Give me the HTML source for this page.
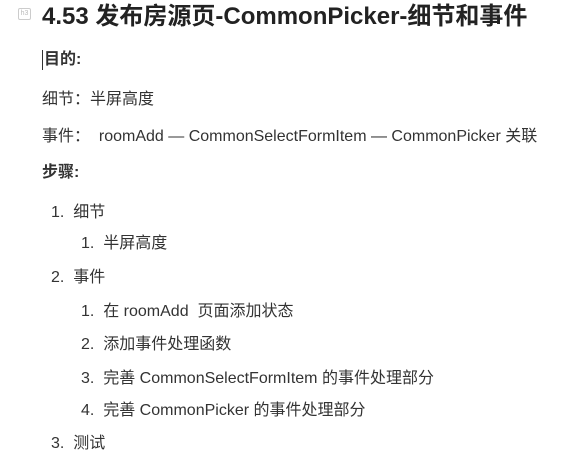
<!DOCTYPE html><html><head><meta charset="utf-8"><style>
body{margin:0;width:566px;height:461px;background:#fff;font-family:"Liberation Sans","Noto Sans CJK SC",sans-serif;color:#333;position:relative;overflow:hidden}
.t{position:absolute;white-space:nowrap;font-size:16px;line-height:20px}
h3{position:absolute;left:42px;top:2px;margin:0;font-size:24px;line-height:30px;font-weight:bold;color:#222;white-space:nowrap}
.h3i{position:absolute;left:18px;top:8px;width:11px;height:10px;border:1px solid #ccc;border-radius:2px;font-size:7px;color:#bbb;text-align:center;line-height:10px}
b{font-weight:bold}
</style></head><body>
<div class="h3i">h3</div>
<h3>4.53 发布房源页-CommonPicker-细节和事件</h3>
<div class="t" style="left:42px;top:50px;border-left:1px solid #333;padding-left:1px"><b>目的:</b></div>
<div class="t" style="left:42px;top:90px">细节：半屏高度</div>
<div class="t" style="left:42px;top:127px">事件：&nbsp; roomAdd — CommonSelectFormItem — CommonPicker 关联</div>
<div class="t" style="left:42px;top:163px"><b>步骤:</b></div>
<div class="t" style="left:51px;top:203px">1.&nbsp; 细节</div>
<div class="t" style="left:81px;top:234px">1.&nbsp; 半屏高度</div>
<div class="t" style="left:51px;top:268px">2.&nbsp; 事件</div>
<div class="t" style="left:81px;top:302px">1.&nbsp; 在 roomAdd&nbsp; 页面添加状态</div>
<div class="t" style="left:81px;top:335px">2.&nbsp; 添加事件处理函数</div>
<div class="t" style="left:81px;top:369px">3.&nbsp; 完善 CommonSelectFormItem 的事件处理部分</div>
<div class="t" style="left:81px;top:401px">4.&nbsp; 完善 CommonPicker 的事件处理部分</div>
<div class="t" style="left:51px;top:434px">3.&nbsp; 测试</div>
</body></html>
